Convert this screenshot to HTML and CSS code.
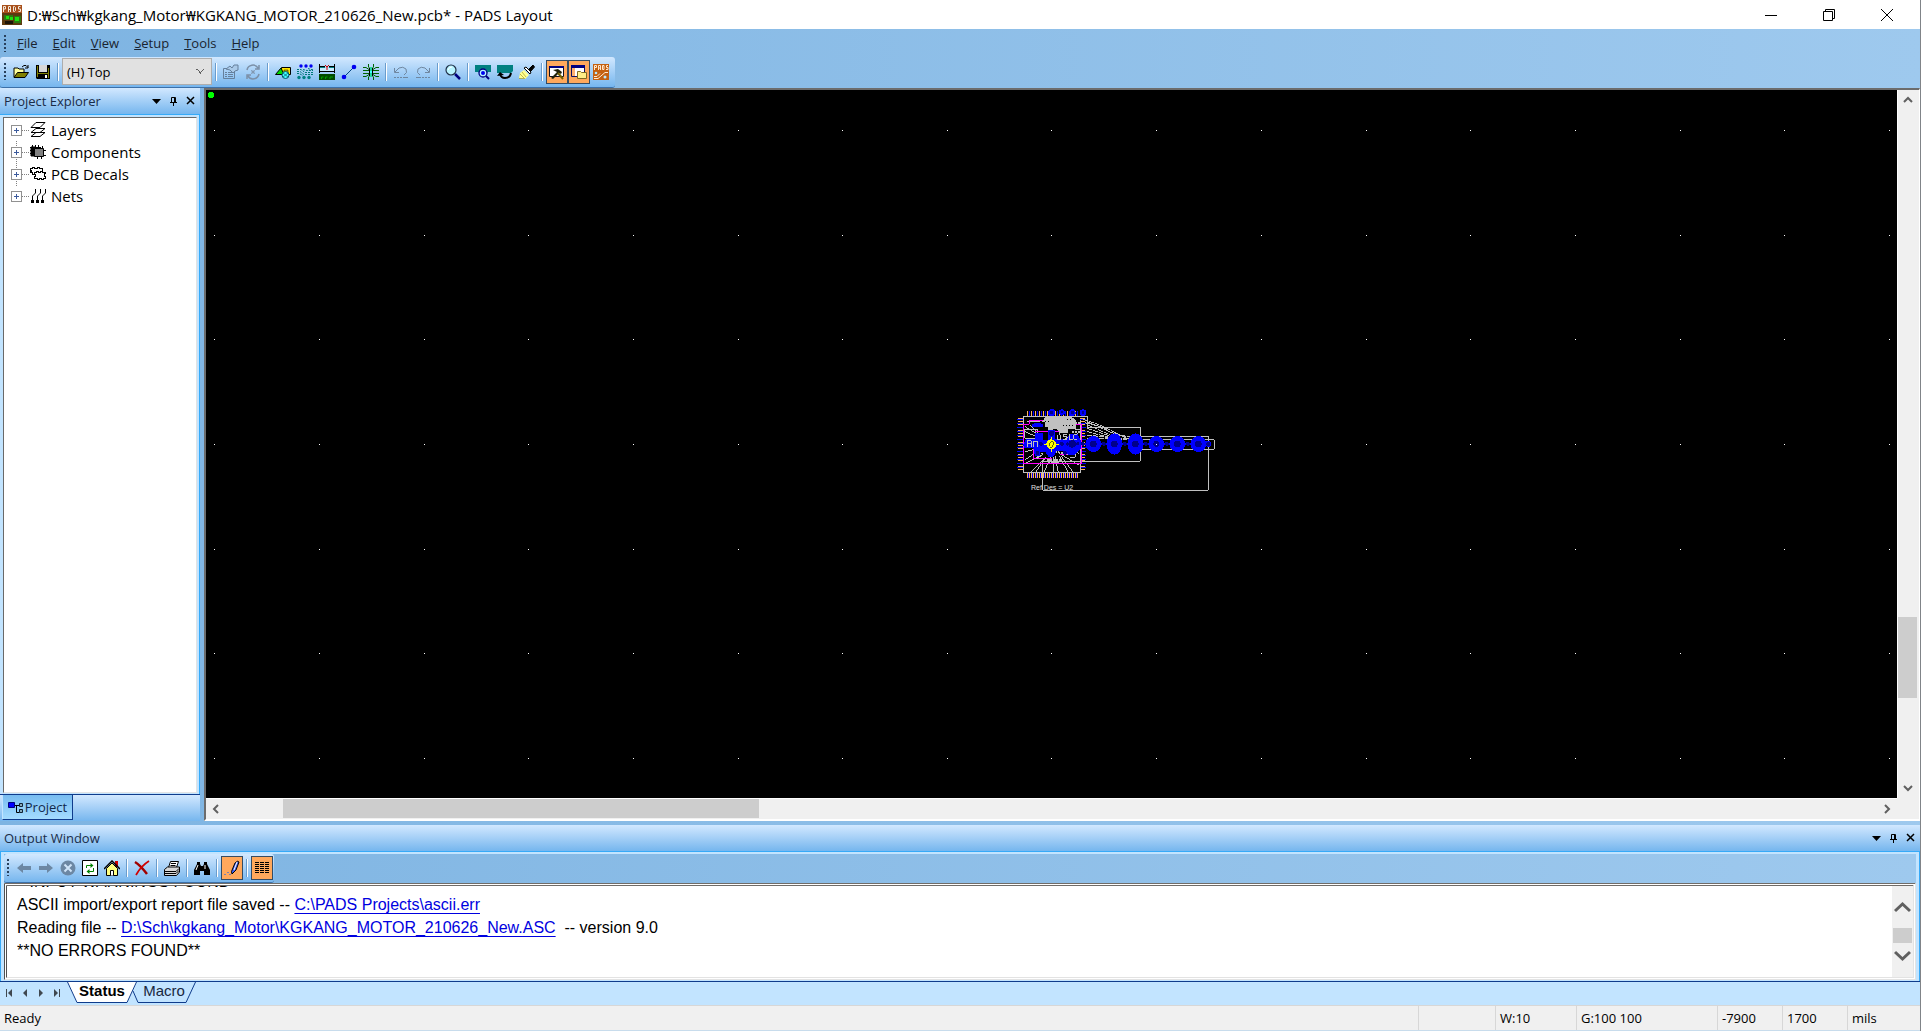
FILE: index.html
```html
<!DOCTYPE html>
<html lang="ko">
<head>
    <meta charset="UTF-8">
    <meta name="viewport" content="width=device-width, initial-scale=1.0">
    <title>PADS Layout</title>
    <link rel="stylesheet" href="styles.css">
</head>
<body>
    <header class="titlebar">
        <svg class="app-icon" width="20" height="20" viewBox="0 0 20 20">
            <rect width="20" height="20" fill="#a8501c"/>
            <rect y="8" width="20" height="12" fill="#5c3a10"/>
            <path d="M1.5 7V1.500h2v2.500h-2M6.500 7V1.500h2V7M6.500 4.500h2M11.500 1.500h1l1 1v3l-1 1h-1zM18.500 1.500h-2v2.500h2v2.500h-2" fill="none" stroke="#f4e8d8"/>
            <path d="M2 10h9v5H2zM12 11h7v7h-7z" fill="#2c7a10"/>
            <path d="M4 11h3v3H4zM8 12h3v3H8zM13 12h4v4h-4z" fill="#1fe010"/>
            <path d="M3 16h8v3H3z" fill="#1c1408"/>
        </svg>
        <h1>D:₩Sch₩kgkang_Motor₩KGKANG_MOTOR_210626_New.pcb* - PADS Layout</h1>
        <div class="window-buttons">
            <button aria-label="Minimize"><svg width="12" height="12" viewBox="0 0 12 12"><path d="M0 6.500h12"/></svg></button>
            <button aria-label="Restore"><svg width="12" height="12" viewBox="0 0 12 12"><path d="M.5 2.500h9v9h-9zM2.500 2.500v-2h9v9h-2"/></svg></button>
            <button aria-label="Close"><svg width="12" height="12" viewBox="0 0 12 12"><path d="M0 0l12 12M12 0L0 12"/></svg></button>
        </div>
    </header>

    <nav class="menubar">
        <span class="grip"></span>
        <a href="#"><u>F</u>ile</a>
        <a href="#"><u>E</u>dit</a>
        <a href="#"><u>V</u>iew</a>
        <a href="#"><u>S</u>etup</a>
        <a href="#"><u>T</u>ools</a>
        <a href="#"><u>H</u>elp</a>
    </nav>

    <div class="toolbar-row">
        <div class="toolbar main-toolbar">
            <span class="grip"></span>
            <button class="tool" aria-label="Open">
                <svg width="16" height="16" viewBox="0 0 16 16">
                    <path d="M1 13V4h4l1 1h5v3" fill="#ffff9c" stroke="#000"/>
                    <path d="M1 13.500L4.500 8.500H15.500L12 13.500z" fill="#808000" stroke="#000"/>
                    <path d="M9 3l2-1.500h2l2 2M15 1v3h-3" fill="none" stroke="#000"/>
                </svg>
            </button>
            <button class="tool" aria-label="Save">
                <svg width="16" height="16" viewBox="0 0 16 16">
                    <path d="M1 1h14v14H2l-1-1z" fill="#000"/>
                    <path d="M2 2h1v11H2zM13 4h1v10h-1zM3 9h10v1H3z" fill="#808000"/>
                    <path d="M4 1h8v7H4z" fill="#d8d8d8"/>
                    <path d="M10 11h2v3h-2z" fill="#fff"/>
                </svg>
            </button>
            <span class="sep"></span>
            <select class="layer-select" aria-label="Layer">
                <option>(H) Top</option>
            </select>
            <span class="sep"></span>
            <button class="tool" aria-label="Properties">
                <svg width="16" height="16" viewBox="0 0 16 16" fill="none" stroke="#66809c">
                    <path d="M.5 4.500h11v10H.5zM2 8.500h2M5 8.500h5M2 10.500h2M5 10.500h5M2 12.500h2M5 12.500h5"/>
                    <path d="M3 5l4-3 2 2 2-3h4v5l-3 1-2 2-3-3z" fill="#a9c9e8"/>
                </svg>
            </button>
            <button class="tool" aria-label="Cycle">
                <svg width="16" height="16" viewBox="0 0 16 16" fill="none" stroke="#7c90a8">
                    <path d="M2 6a6 6 0 0 1 11-2M14 1v4h-4M14 10a6 6 0 0 1-11 2M2 15v-4h4" stroke-width="1.500"/>
                    <path d="M8 6v4M6 8h4M6 6l4 4M10 6l-4 4" stroke-width=".7"/>
                </svg>
            </button>
            <span class="sep"></span>
            <button class="tool" aria-label="Drafting">
                <svg width="16" height="16" viewBox="0 0 16 16">
                    <path d="M6.500 3.500h9v7h-9z" fill="#ffe600" stroke="#000"/>
                    <path d="M9 6h4v3H9z" fill="#c8b800" stroke="#000" stroke-width=".5"/>
                    <path d="M.5 10.500L6 4l3 6.500z" fill="#00d800" stroke="#000"/>
                    <circle cx="10.500" cy="11" r="3.500" fill="#4ff" stroke="#056"/>
                    <path d="M8 9l5 4M13 9l-5 4" stroke="#056" stroke-width=".7"/>
                </svg>
            </button>
            <button class="tool" aria-label="Design">
                <svg width="16" height="16" viewBox="0 0 16 16">
                    <g fill="#0000f0"><circle cx="4" cy="2" r="1.700"/><circle cx="9" cy="2" r="1.700"/><circle cx="14" cy="2" r="1.700"/></g>
                    <path d="M0 5.500h4l4 3h8M0 7.500h3l4 3h9M0 9.500h2l4 2M6 5.500l4 1h6M11 4.500l3 1h2" fill="none" stroke="#007878" stroke-dasharray="2 1"/>
                    <g fill="#008080"><circle cx="2" cy="13.500" r="1.700"/><circle cx="7" cy="13.500" r="1.700"/><circle cx="12" cy="13.500" r="1.700"/></g>
                </svg>
            </button>
            <button class="tool" aria-label="Dimensioning">
                <svg width="16" height="16" viewBox="0 0 16 16">
                    <path d="M1 4h14v4H1z" fill="#c8ecff"/>
                    <path d="M.5 0v9M15.500 0v9M1 2.500h5M10 2.500h5M1 7.500h14" stroke="#000" fill="none"/>
                    <path d="M1 3.500h5M10 3.500h5" stroke="#008080"/>
                    <path d="M6 1l2 2 2-2M8 3v3" stroke="#d00000" fill="none"/>
                    <path d="M0 10h16v6H0z" fill="#004a00"/>
                    <path d="M2.500 15v-2h2M6.500 15v-2h2M11 15v-2h3" stroke="#00a000" fill="none"/>
                </svg>
            </button>
            <button class="tool" aria-label="Route">
                <svg width="16" height="16" viewBox="0 0 16 16">
                    <path d="M3 13L13 3" stroke="#004080"/>
                    <circle cx="3" cy="13" r="2.300" fill="#0000f0"/><circle cx="13" cy="3" r="2.300" fill="#0000f0"/>
                </svg>
            </button>
            <button class="tool" aria-label="BGA">
                <svg width="16" height="16" viewBox="0 0 16 16">
                    <path d="M0 3.500h3l3 2M0 6.500h6M0 9.500h6M0 12.500h3l3-2M16 3.500h-3l-3 2M16 6.500h-6M16 9.500h-6M16 12.500h-3l-3-2M5.500 0v3l1 1M10.500 0v3l-1 1M5.500 16v-3l1-1M10.500 16v-3l-1-1" fill="none" stroke="#006400"/>
                    <path d="M6 4h4v8H6z" fill="#000"/><path d="M7 3h2v10H7z" fill="#20d8a0"/><path d="M7 7h2v2H7z" fill="#4ff"/>
                </svg>
            </button>
            <span class="sep"></span>
            <button class="tool" aria-label="Undo">
                <svg width="16" height="16" viewBox="0 0 16 16" fill="none" stroke="#6f87a0">
                    <path d="M1.500 4v4.500h4.500M2 8l4-4q4-2 7 1q2 4-2 6"/><path d="M1 13.500h8" stroke-dasharray="2 1"/><path d="M10 13.500h5"/>
                </svg>
            </button>
            <button class="tool" aria-label="Redo">
                <svg width="16" height="16" viewBox="0 0 16 16" fill="none" stroke="#6f87a0">
                    <path d="M14.500 4v4.500h-4.500M14 8l-4-4q-4-2-7 1q-2 4 2 6"/><path d="M7 13.500h8" stroke-dasharray="2 1"/><path d="M1 13.500h5"/>
                </svg>
            </button>
            <span class="sep"></span>
            <button class="tool" aria-label="Zoom">
                <svg width="16" height="16" viewBox="0 0 16 16">
                    <path d="M10 10l5 5" stroke="#000080" stroke-width="2.500"/>
                    <circle cx="6" cy="6" r="5" fill="#b8f4ff" stroke="#203048" stroke-width="1.200"/>
                    <path d="M3 6q1-3 4-3" stroke="#fff" fill="none"/>
                </svg>
            </button>
            <span class="sep"></span>
            <button class="tool" aria-label="Board view">
                <svg width="16" height="16" viewBox="0 0 16 16">
                    <path d="M0 1h16v7h-3l-2 2H6L3 8H0z" fill="#008080"/>
                    <circle cx="8" cy="9" r="4" fill="#b8f4ff" stroke="#000080" stroke-width="1.300"/>
                    <circle cx="8" cy="9" r="2" fill="#0000f0"/><path d="M11 12l3 3" stroke="#000080" stroke-width="2"/>
                </svg>
            </button>
            <button class="tool" aria-label="Redraw">
                <svg width="16" height="16" viewBox="0 0 16 16">
                    <path d="M0 1h16v6l-2 2H0z" fill="#008080"/>
                    <path d="M3 10q1 4 5 4q5 0 6-5" fill="none" stroke="#000" stroke-width="2"/><path d="M0 12l3-4 4 3z"/>
                </svg>
            </button>
            <button class="tool" aria-label="Cleanup">
                <svg width="16" height="16" viewBox="0 0 16 16">
                    <path d="M10 5l4-4 1.500 2L12 7z" fill="#000" stroke="#000"/>
                    <path d="M5 6l5 5-4 4-6-1 1-5z" fill="#ffff90"/>
                    <path d="M5 4l2-1 5 5-1 2z" fill="#fff" stroke="#000"/>
                    <path d="M3 8l4 5M1 10l4 4M0 14.500h6" stroke="#a09830" stroke-width=".7"/>
                </svg>
            </button>
            <span class="sep"></span>
            <button class="tool active" aria-label="Output window" aria-pressed="true">
                <svg width="16" height="16" viewBox="0 0 16 16">
                    <path d="M.5 2.500h14v10H.5z" fill="#fff" stroke="#101020"/><path d="M0 2h15v2H0z" fill="#000080"/>
                    <path d="M4 6l5-1 4 3-1 2-2-1-6 6-2-1 6-6z" fill="#202008"/><path d="M9 9l5 6" stroke="#706000" stroke-width="2"/>
                </svg>
            </button>
            <button class="tool active" aria-label="Project explorer" aria-pressed="true">
                <svg width="16" height="16" viewBox="0 0 16 16">
                    <path d="M.5 1.500h13v11H.5z" fill="#fff" stroke="#101060"/><path d="M0 1h14v3H0z" fill="#000080"/><path d="M1 4h3v8H1z" fill="#ffb070"/>
                    <path d="M6.500 14.500v-7h3l1 1h5v6z" fill="#ffee88" stroke="#806a20"/>
                </svg>
            </button>
            <button class="tool" aria-label="PADS Router">
                <svg width="16" height="16" viewBox="0 0 16 16">
                    <path d="M0 0h16v16H0z" fill="#c46010"/>
                    <path d="M1.500 6V1.500h2v2h-2M5.500 6V1.500h2V6M5.500 4h2M9.500 1.500h1.500v4H9.500zM15 1.500h-1.500v2h1.500v2h-2M1 14.500h4L12 8.500h3M1 12.500h3l3-3" fill="none" stroke="#ffe8d0"/>
                    <circle cx="3" cy="9" r="1.300" fill="#b8e8ff"/><circle cx="12" cy="13" r="1.500" fill="#b8e8ff"/>
                </svg>
            </button>
        </div>
    </div>

    <main class="workspace">
        <section class="explorer">
            <div class="panel-header">
                <h2>Project Explorer</h2>
                <button aria-label="Menu"><svg width="9" height="10" viewBox="0 0 9 10"><path d="M0 3h9L4.500 8z"/></svg></button>
                <button aria-label="Pin"><svg width="9" height="10" viewBox="0 0 9 10"><path d="M2.500 6V1.500h4V6M5.500 1v5M1 6.500h7M4.500 7v3" fill="none" stroke="#000"/></svg></button>
                <button aria-label="Close"><svg width="9" height="10" viewBox="0 0 9 10"><path d="M1 1l7 7M8 1L1 8" fill="none" stroke="#000" stroke-width="1.500"/></svg></button>
            </div>
            <div class="panel-body">
                <ul class="tree">
                    <li>
                        <span class="expander"></span>
                        <svg width="16" height="16" viewBox="0 0 16 16" fill="#fff" stroke="#000"><path d="M1 14.500l5-4h9l-5 4zM1 10.500l5-4h9l-5 4zM1 5.500l5-5h9l-5 5z"/></svg>
                        Layers
                    </li>
                    <li>
                        <span class="expander"></span>
                        <svg width="16" height="16" viewBox="0 0 16 16" stroke="#000"><path d="M0 3.500h11M0 6.500h4M0 9.500h4M2.500 1v10M5.500 1v4M8.500 1v3M12.500 2v3M7.500 12v3M11.500 12v3M13 6.500h3M13 11.500h3"/><path d="M1 3h4v9H1z"/><path d="M4.500 4.500h9v8h-9z" fill="#808080"/></svg>
                        Components
                    </li>
                    <li>
                        <span class="expander"></span>
                        <svg width="16" height="16" viewBox="0 0 16 16" fill="#fff" stroke="#000" shape-rendering="crispEdges"><path d="M.5 2.500h2v-1h2v1h3v-1h2v1h3v6H2.500v-2h-2v-1h1v-1h-1z"/><path d="M4.500 6.500h2v-1h2v1h2v-1h2v1h3v1h-1v3h1v2h-2v1h-2v-1h-2v1h-2v-1h-3v-2h1v-2h-1z"/></svg>
                        PCB Decals
                    </li>
                    <li>
                        <span class="expander"></span>
                        <svg width="16" height="16" viewBox="0 0 16 16" fill="none" stroke="#000"><path d="M5.500 1v4l-3 3v5M10.500 1v4l-3 3v5M15.500 1v4l-3 3v5"/><path d="M1 12h3v3H1zM6 12h3v3H6zM11 12h3v3h-3z" fill="#000" stroke="none"/></svg>
                        Nets
                    </li>
                </ul>
            </div>
            <div class="explorer-tabs">
                <button class="project-tab">
                    <svg width="15" height="13" viewBox="0 0 15 13"><path d="M.5 1.500h6v5h-6z" fill="#00f" stroke="#000080"/><path d="M7 4.500h4M8.500 5v6.500h3" fill="none" stroke="#000"/><path d="M11.500 2.500h3v3h-3zM11.500 8.500h3v3h-3z" fill="#8ab" stroke="#123"/></svg>
                    Project
                </button>
            </div>
        </section>

        <section class="board">
            <svg class="board-view" viewBox="0 0 1691 708" preserveAspectRatio="xMinYMin slice" shape-rendering="crispEdges">
                <defs>
                    <path id="grid-row" d="M8 .5h1m104 0h1m104 0h1m103 0h1m104 0h1m104 0h1m103 0h1m104 0h1m103 0h1m104 0h1m104 0h1m104 0h1m103 0h1m104 0h1m104 0h1m103 0h1m104 0h1" stroke="#fff"/>
                </defs>
                <use href="#grid-row" y="40"/>
                <use href="#grid-row" y="145"/>
                <use href="#grid-row" y="249"/>
                <use href="#grid-row" y="354"/>
                <use href="#grid-row" y="459"/>
                <use href="#grid-row" y="563"/>
                <use href="#grid-row" y="668"/>
                <circle cx="5" cy="5" r="3" fill="#0f0"/>

                <!-- the board itself, three units to a pixel -->
                <g transform="translate(794 300) scale(.33333)" fill="none">
                    <path d="M80 70H235M80 257H235" stroke="#ffb060" stroke-width="15" stroke-dasharray="3 3"/>
                    <path d="M86 70H235M83 257H235" stroke="#00f" stroke-width="15" stroke-dasharray="3 9"/>
                    <path d="M62 85V243M249 85V243" stroke="#ffb060" stroke-width="15" stroke-dasharray="3 6"/>
                    <path d="M60 88V243M249 88V243" stroke="#00f" stroke-width="18" stroke-dasharray="3 9"/>
                    <g stroke="#c0c0c0" stroke-width="3">
                        <path d="M70 79H262V112H421V214H128M70 79V249H241V90M128 214V301H625V139H421M421 178H643V149H430"/>
                        <path d="M250 88L300 105 380 145 440 150M262 95L340 130 420 148M262 104L330 135 400 140M262 115L340 142M262 125L350 148M262 135L380 149M255 98L310 112 350 142M262 145H380" stroke-dasharray="15 3"/>
                        <path d="M75 210l45-30M75 220l50-25M92 246l40-38M108 246l30-45M132 247l22-50M160 247V200M175 247l-10-50M205 247l-28-50M220 247l-38-50M236 225l-50-30M75 110l50 30M75 125l45 20M75 150l40 5M75 185l40-10M80 95h40M90 105l30 30M235 130l-40 15M236 190l-40-15"/>
                        <path d="M75 118H112V145H75zM180 100v35M190 100v30M225 118h14M210 202h16v-30"/>
                    </g>
                    <path d="M70 103H88V91H145M70 103V222H246V103H225M105 125H180M100 170V205H155M180 195H225" stroke="#f0f" stroke-width="3"/>
                    <path d="M135 82H215L228 90V118H205V130H180L172 118H160V125H145V112H135V97H125z" fill="#c0c0c0"/>
                    <path d="M200 88h18M190 106h30M135 94h12M130 116h14M145 125h24" stroke="#000" stroke-width="3" stroke-dasharray="3 6"/>
                    <path d="M225 100h14M215 126h24M165 185l45 10M130 190l-20 15M140 210h45M145 216h36" stroke="#c0c0c0" stroke-width="6" stroke-dasharray="6 3"/>
                    <g fill="#00f">
                        <circle cx="155" cy="68" r="11"/><circle cx="186" cy="67" r="9"/><circle cx="217" cy="68" r="10"/><circle cx="249" cy="68" r="10"/>
                        <path d="M95 105Q112 90 130 105V112H95zM105 130H128V150H145V120H165V148H200L210 132H232L242 150V175L225 195H205L190 182H170L160 200H145L135 185H120V198H105L100 175H75L68 165L78 148H105z"/>
                        <circle cx="280" cy="162" r="24"/><ellipse cx="343" cy="162" rx="23" ry="32"/><ellipse cx="406" cy="162" rx="24" ry="32"/><circle cx="469" cy="162" r="24"/><circle cx="532" cy="162" r="24"/><circle cx="595" cy="162" r="24"/>
                        <path d="M230 158H630V166H230z"/>
                        <circle cx="625" cy="162" r="9"/>
                    </g>
                    <path d="M82 150v22M82 152h12v9H82h12v11M100 172v-18h12v18M172 134v14h10v-14M202 134h-12v7h10v8h-12M208 132v16h10M232 134h-10v14h10" stroke="#c0c0c0" stroke-width="3"/>
                    <g fill="#00008b">
                        <circle cx="155" cy="68" r="5"/><circle cx="186" cy="67" r="4"/><circle cx="217" cy="68" r="5"/><circle cx="249" cy="68" r="4"/>
                        <circle cx="217" cy="162" r="11"/><circle cx="280" cy="162" r="10"/><circle cx="343" cy="162" r="10"/><circle cx="406" cy="162" r="10"/><circle cx="469" cy="162" r="9"/><circle cx="532" cy="162" r="10"/><circle cx="595" cy="162" r="10"/>
                        <circle cx="123" cy="162" r="6"/><circle cx="186" cy="162" r="6"/><circle cx="203" cy="162" r="5"/><circle cx="234" cy="162" r="5"/><circle cx="249" cy="162" r="6"/><circle cx="312" cy="162" r="6"/><circle cx="375" cy="162" r="6"/><circle cx="438" cy="162" r="6"/><circle cx="501" cy="162" r="6"/><circle cx="564" cy="162" r="6"/><circle cx="625" cy="162" r="6"/>
                        <circle cx="113" cy="189" r="6"/><circle cx="155" cy="130" r="8"/><circle cx="195" cy="189" r="6"/>
                    </g>
                    <circle cx="154" cy="163" r="15" fill="#ff0"/>
                    <path d="M154 141v44M132 163h44" stroke="#ff0" stroke-width="3"/>
                    <path d="M149 168V158l8-4 4 6-4 12h-8" stroke="#606000" stroke-width="3"/>
                    <path d="M467 162h4v3h-4z" fill="#fff"/>
                </g>
                <text class="ref-des" x="825" y="400">Ref Des = U2</text>
            </svg>
            <div class="scrollbar vertical">
                <button aria-label="Scroll up"><svg width="10" height="8" viewBox="0 0 10 8"><path d="M1 6l4-4 4 4"/></svg></button>
                <span class="thumb"></span>
                <button aria-label="Scroll down"><svg width="10" height="8" viewBox="0 0 10 8"><path d="M1 2l4 4 4-4"/></svg></button>
            </div>
            <div class="scrollbar horizontal">
                <button aria-label="Scroll left"><svg width="8" height="10" viewBox="0 0 8 10"><path d="M6 1L2 5l4 4"/></svg></button>
                <span class="thumb"></span>
                <button aria-label="Scroll right"><svg width="8" height="10" viewBox="0 0 8 10"><path d="M2 1l4 4-4 4"/></svg></button>
            </div>
        </section>
    </main>

    <section class="output">
        <div class="panel-header">
            <h2>Output Window</h2>
            <button aria-label="Menu"><svg width="9" height="10" viewBox="0 0 9 10"><path d="M0 3h9L4.500 8z"/></svg></button>
            <button aria-label="Pin"><svg width="9" height="10" viewBox="0 0 9 10"><path d="M2.500 6V1.500h4V6M5.500 1v5M1 6.500h7M4.500 7v3" fill="none" stroke="#000"/></svg></button>
            <button aria-label="Close"><svg width="9" height="10" viewBox="0 0 9 10"><path d="M1 1l7 7M8 1L1 8" fill="none" stroke="#000" stroke-width="1.500"/></svg></button>
        </div>
        <div class="output-body">
            <div class="toolbar-row">
                <div class="toolbar">
                    <span class="grip"></span>
                    <button class="tool" aria-label="Back"><svg width="16" height="16" viewBox="0 0 16 16"><path d="M1 8l6-5v3h8v4H7v3z" fill="#6c87a3"/></svg></button>
                    <button class="tool" aria-label="Forward"><svg width="16" height="16" viewBox="0 0 16 16"><path d="M15 8L9 3v3H1v4h8v3z" fill="#6c87a3"/></svg></button>
                    <button class="tool" aria-label="Stop"><svg width="16" height="16" viewBox="0 0 16 16"><circle cx="8" cy="8" r="7.500" fill="#6c87a3"/><path d="M4.500 4.500l7 7M11.500 4.500l-7 7" stroke="#cfe4f8" stroke-width="2"/></svg></button>
                    <button class="tool" aria-label="Refresh"><svg width="16" height="16" viewBox="0 0 16 16"><path d="M.5 .5h15v15H.5z" fill="#fff" stroke="#000"/><path d="M4.500 8V5.500h5M11.500 8v3.500h-5" fill="none" stroke="#008000"/><path d="M8.500 3v5l3-2.500zM7.500 9v5l-3-2.500z" fill="#008000"/></svg></button>
                    <button class="tool" aria-label="Home"><svg width="16" height="16" viewBox="0 0 16 16"><path d="M11 1h3v6h-3z" fill="#d00000"/><path d="M2.500 8.500L8 3l5.500 5.500v7h-11z" fill="#ffff80" stroke="#000"/><path d="M0 9l8-8 8 8" fill="none" stroke="#000" stroke-width="1.500"/><path d="M6.500 15.500v-5h3v5" fill="#fff" stroke="#000"/></svg></button>
                    <span class="sep"></span>
                    <button class="tool" aria-label="Clear"><svg width="16" height="16" viewBox="0 0 16 16" fill="none"><path d="M1 2q5 3 12 12" stroke="#a00000" stroke-width="2.500"/><path d="M15 1Q7 6 2 15" stroke="#d00000" stroke-width="1.700"/></svg></button>
                    <span class="sep"></span>
                    <button class="tool" aria-label="Print"><svg width="16" height="16" viewBox="0 0 16 16"><path d="M4.500 7.500l2-6h8l-2 6" fill="#fff" stroke="#000"/><path d="M7 3.500h5M6.500 5.500h5" stroke="#000"/><path d="M.5 9.500l3-2.500h12v5l-3 3.500H.5z" fill="#d8d8d8" stroke="#000"/><path d="M1 11.500h11l3-3M1 13.500h11l3-3" fill="none" stroke="#000"/></svg></button>
                    <span class="sep"></span>
                    <button class="tool" aria-label="Find"><svg width="16" height="16" viewBox="0 0 16 16"><path d="M3 2h3v2l1 2h2l1-2V2h3v2l3 6v5h-6v-4H6v4H0v-5l3-6z"/><path d="M4 5l-2 5M11 5v4" stroke="#fff"/></svg></button>
                    <span class="sep"></span>
                    <button class="tool active" aria-label="Log to file" aria-pressed="true"><svg width="16" height="16" viewBox="0 0 16 16"><path d="M7.500 11.500L11 3q3-3 4-1l-3 8-4 4z" fill="#4060f0" stroke="#000"/><path d="M10 10l3-8" stroke="#fff"/><path d="M0 14.500h2M3 12.500h2M5 14.500h2" stroke="#7880b0"/></svg></button>
                    <span class="sep"></span>
                    <button class="tool active" aria-label="Grid" aria-pressed="true"><svg width="16" height="16" viewBox="0 0 16 16"><path d="M1 2.500h14M1 4.500h14M1 6.500h14M1 8.500h14M1 10.500h14M1 12.500h14" stroke="#000" stroke-dasharray="4 1"/></svg></button>
                </div>
            </div>
            <div class="log-frame">
                <div class="log">
                    <p>**INPUT WARNINGS FOUND**</p>
                    <p>ASCII import/export report file saved -- <a href="#">C:\PADS Projects\ascii.err</a></p>
                    <p>Reading file -- <a href="#">D:\Sch\kgkang_Motor\KGKANG_MOTOR_210626_New.ASC</a>&nbsp; -- version 9.0</p>
                    <p>**NO ERRORS FOUND**</p>
                </div>
                <div class="log-scroll">
                    <button aria-label="Scroll up"><svg width="17" height="13" viewBox="0 0 17 13"><path d="M1 10l7.500-7 7.500 7"/></svg></button>
                    <span class="thumb"></span>
                    <button aria-label="Scroll down"><svg width="17" height="13" viewBox="0 0 17 13"><path d="M1 3l7.500 7L16 3"/></svg></button>
                </div>
            </div>
        </div>
        <div class="sheet-tabs">
            <button class="sheet-nav" aria-label="First"><svg width="8" height="8" viewBox="0 0 8 8"><path d="M1 0h1v8H1zM7 0v8L3 4z"/></svg></button>
            <button class="sheet-nav" aria-label="Previous"><svg width="8" height="8" viewBox="0 0 8 8"><path d="M6 0v8L2 4z"/></svg></button>
            <button class="sheet-nav" aria-label="Next"><svg width="8" height="8" viewBox="0 0 8 8"><path d="M2 0v8l4-4z"/></svg></button>
            <button class="sheet-nav" aria-label="Last"><svg width="8" height="8" viewBox="0 0 8 8"><path d="M6 0h1v8H6zM1 0v8l4-4z"/></svg></button>
            <button class="sheet selected">
                <svg width="70" height="21" viewBox="0 0 70 21"><path d="M0 0l10 20.500h50L70 0z" fill="#fff"/><path d="M.5 0l9.500 20.500h50L69.500 0" fill="none" stroke="#0f3c8c"/></svg>
                <span>Status</span>
            </button>
            <button class="sheet">
                <svg width="64" height="21" viewBox="0 0 64 21"><path d="M1 9l5 11.500h48L63.500 0" fill="none" stroke="#0f3c8c"/></svg>
                <span>Macro</span>
            </button>
        </div>
    </section>

    <footer class="statusbar">
        <span class="message">Ready</span>
        <span class="cell blank"></span>
        <span class="cell trace">W:10</span>
        <span class="cell grid">G:100 100</span>
        <span class="cell coord">-7900</span>
        <span class="cell coord">1700</span>
        <span class="cell units">mils</span>
    </footer>
</body>
</html>
```
FILE: styles.css
```css
:root {
    --bar: linear-gradient(90deg, #7eb4e2, #9ec9ee);
    --panel: linear-gradient(#d2e8ff, #76b6ee);
    --navy: #0f3c8c;
    --cyan: #36aaf8;
    --active: #ffa85c;
    --face: #f0f0f0;
    --thumb: #cdcdcd;
}

* {
    margin: 0;
    padding: 0;
    box-sizing: border-box;
}

body {
    display: flex;
    flex-direction: column;
    height: 100vh;
    overflow: hidden;
    border-right: 1px solid #808488;
    background: var(--bar);
    color: #000;
    font-family: "Open Sans", "Noto Sans", "Noto Sans CJK KR", sans-serif;
    font-size: 13px;
}

button {
    display: flex;
    align-items: center;
    justify-content: center;
    border: none;
    background: none;
    color: inherit;
    font: inherit;
}

svg {
    display: block;
    flex: none;
}

/* title bar and menu */
.titlebar {
    display: flex;
    align-items: center;
    flex: none;
    height: 29px;
    padding: 0 4px 0 2px;
    background: #fff;
}

.titlebar h1 {
    flex: 1;
    margin-left: 5px;
    font-size: 15px;
    font-weight: normal;
    line-height: 20px;
    white-space: nowrap;
}

.window-buttons {
    display: flex;
}

.window-buttons button {
    width: 58px;
    height: 28px;
}

.window-buttons path {
    fill: none;
    stroke: #000;
}

.menubar {
    display: flex;
    align-items: center;
    flex: none;
    height: 28px;
    padding-left: 4px;
}

.menubar a {
    margin-right: 15px;
    color: #1a2430;
    text-decoration: none;
}

.menubar .grip {
    margin-right: 11px;
}

.grip {
    flex: none;
    width: 2px;
    height: 17px;
    background: repeating-linear-gradient(#28405c 0 2px, transparent 2px 4px);
}

/* toolbars */
.toolbar-row {
    display: flex;
    flex: none;
}

.toolbar {
    display: flex;
    align-items: center;
    height: 31px;
    padding: 0 3px 1px 4px;
    border-bottom: 1px solid #3c70a8;
    border-radius: 3px;
    background: var(--panel);
}

.toolbar .grip {
    margin-right: 4px;
}

.tool {
    flex: none;
    width: 22px;
    height: 24px;
}

.tool.active {
    border: 1px solid #344c64;
    background: var(--active);
}

.sep {
    flex: none;
    width: 2px;
    height: 18px;
    margin: 0 3px;
    background: linear-gradient(90deg, #6a9ccc 50%, #fff 50%);
}

.layer-select {
    width: 150px;
    height: 27px;
    padding: 0 4px;
    appearance: none;
    border: 1px solid #adadad;
    border-radius: 0;
    background: linear-gradient(45deg, transparent 50%, #606060 50% 66%, transparent 66%) right 10px top 10px / 5px 5px no-repeat,
        linear-gradient(-45deg, transparent 50%, #606060 50% 66%, transparent 66%) right 6px top 10px / 5px 5px no-repeat,
        #e1e1e1;
    color: #000;
    font: inherit;
}

/* project explorer */
.workspace {
    display: flex;
    flex: 1;
    gap: 4px;
    min-height: 0;
    margin-bottom: 4px;
}

.explorer {
    display: flex;
    flex-direction: column;
    flex: none;
    width: 200px;
}

.panel-header {
    display: flex;
    align-items: center;
    flex: none;
    height: 26px;
    padding: 0 1px 0 4px;
    background: var(--panel);
}

.panel-header h2 {
    flex: 1;
    color: #1a2c48;
    font-size: 13px;
    font-weight: normal;
}

.panel-header button {
    width: 17px;
    height: 18px;
}

.panel-body {
    flex: 1;
    min-height: 0;
    padding: 2px 2px 1px 3px;
    border-top: 1px solid var(--cyan);
    border-right: 1px solid var(--cyan);
    background: #c2e4ff;
}

.tree {
    height: 100%;
    padding: 1px 7px;
    border: 1px solid #e3e3e3;
    border-top: 1px solid #696969;
    border-left: 1px solid #696969;
    background: #fff;
    list-style: none;
}

.tree li {
    display: flex;
    align-items: center;
    height: 22px;
    font-size: 15px;
    background: linear-gradient(#808080 50%, transparent 50%) 5px 0 / 1px 2px repeat-y;
}

.tree li:first-child,
.tree li:last-child {
    background-repeat: no-repeat;
}

.tree li svg {
    margin: 0 5px 0 1px;
}

.expander {
    display: flex;
    align-items: center;
    width: 18px;
    height: 11px;
    background: linear-gradient(#3c5a9c, #3c5a9c) 3px 5px / 5px 1px no-repeat,
        linear-gradient(#3c5a9c, #3c5a9c) 5px 3px / 1px 5px no-repeat,
        linear-gradient(#fff, #fff) 1px 1px / 9px 9px no-repeat,
        linear-gradient(#919191, #919191) 0 0 / 11px 11px no-repeat,
        repeating-linear-gradient(90deg, #808080 0 1px, transparent 1px 2px) 11px 5px / 7px 1px no-repeat;
}

.explorer-tabs {
    flex: none;
    height: 27px;
    padding-left: 2px;
    border-top: 1px solid var(--navy);
    background: var(--panel);
}

.project-tab {
    gap: 2px;
    width: 71px;
    height: 25px;
    border: 1px solid var(--navy);
    border-top: none;
    border-left-color: #c2e4ff;
    background: linear-gradient(#78bcf0, #a4dcff);
    color: #10284c;
}

/* board canvas */
.board {
    display: grid;
    grid-template-columns: 1fr 22px;
    grid-template-rows: 1fr 21px;
    flex: 1;
    min-width: 0;
    border: 2px solid #6c6c6c;
    border-right: 1px solid #fff;
    border-bottom: 2px solid #fff;
    background: var(--face);
}

.board-view {
    width: 100%;
    height: 100%;
    min-height: 0;
    background: #000;
}

.ref-des {
    fill: #e0e0e0;
    font-family: "Liberation Sans", Arial, sans-serif;
    font-size: 7px;
}

.scrollbar {
    display: flex;
    background: var(--face);
}

.scrollbar path,
.log-scroll path {
    fill: none;
    stroke: #606060;
    stroke-width: 2;
}

.scrollbar.vertical {
    flex-direction: column;
    border-left: 1px solid #fff;
}

.scrollbar.horizontal {
    border-top: 1px solid #fff;
}

.vertical button {
    width: 19px;
    height: 20px;
}

.horizontal button {
    width: 20px;
    height: 19px;
}

.thumb {
    background: var(--thumb);
}

.vertical .thumb {
    flex: 81;
    order: 2;
    width: 19px;
}

.vertical::before,
.vertical::after,
.horizontal::before,
.horizontal::after {
    content: "";
}

.vertical::before {
    flex: 507;
    order: 1;
}

.vertical::after {
    flex: 80;
    order: 3;
}

/* the first button keeps order 0, the second closes the track */
.vertical button:last-child,
.horizontal button:last-child {
    order: 4;
}

.horizontal::before {
    flex: 57;
    order: 1;
}

.horizontal .thumb {
    flex: 476;
    order: 2;
    height: 19px;
}

.horizontal::after {
    flex: 1118;
    order: 3;
}

/* output window */
.output {
    display: flex;
    flex-direction: column;
    flex: none;
}

.output-body {
    padding: 2px 3px 1px;
    border-top: 1px solid var(--cyan);
    border-right: 1px solid var(--cyan);
    border-left: 1px solid var(--cyan);
    background: #c2e4ff;
}

.output-body .toolbar-row {
    background: var(--bar);
}

.output-body .toolbar {
    height: 29px;
    padding: 0 1px 1px 3px;
}

.log-frame {
    display: flex;
    height: 97px;
    border: 3px double #505050;
    border-top-color: #706c68;
    border-right-color: #e3e3e3;
    border-bottom-color: #e3e3e3;
    background: #fff;
}

.log {
    display: flex;
    flex: 1;
    flex-direction: column;
    justify-content: flex-end;
    overflow: hidden;
    padding: 0 10px 15px;
    font-family: "Liberation Sans", Arial, sans-serif;
    font-size: 16px;
    line-height: 23px;
}

.log p {
    flex: none;
}

.log a {
    color: #0000e0;
    text-underline-offset: 3px;
    text-decoration-skip-ink: none;
}

.log-scroll {
    display: flex;
    flex-direction: column;
    align-items: center;
    justify-content: center;
    gap: 5px;
    width: 21px;
    background: var(--face);
}

.log-scroll path {
    stroke-width: 3;
}

.log-scroll button {
    height: 15px;
}

.log-scroll .thumb {
    width: 19px;
    height: 15px;
    margin-top: 8px;
}

.sheet-tabs {
    display: flex;
    height: 24px;
    padding-left: 1px;
    border-top: 1px solid var(--navy);
    background: #c2e4ff;
    font-family: "Liberation Sans", Arial, sans-serif;
    font-size: 15px;
}

.sheet-nav {
    width: 16px;
    height: 21px;
    fill: #404850;
}

.sheet {
    display: grid;
    height: 20px;
    margin-left: -5px;
    color: #182840;
    line-height: 17px;
}

.sheet svg,
.sheet span {
    grid-area: 1 / 1;
    place-self: start center;
}

.sheet.selected {
    margin-left: 2px;
    color: #000;
    font-weight: bold;
}

/* status bar */
.statusbar {
    display: flex;
    align-items: stretch;
    flex: none;
    height: 26px;
    border-top: 1px solid #d7d7d7;
    border-bottom: 1px solid #c8dcec;
    background: var(--face);
    line-height: 25px;
}

.message {
    flex: 1;
    padding-left: 4px;
}

.cell {
    flex: none;
    padding-left: 4px;
    border-left: 1px solid #d7d7d7;
}

.blank {
    width: 77px;
}

.trace {
    width: 81px;
}

.grid {
    width: 141px;
}

.coord {
    width: 65px;
}

.units {
    width: 73px;
}
```
